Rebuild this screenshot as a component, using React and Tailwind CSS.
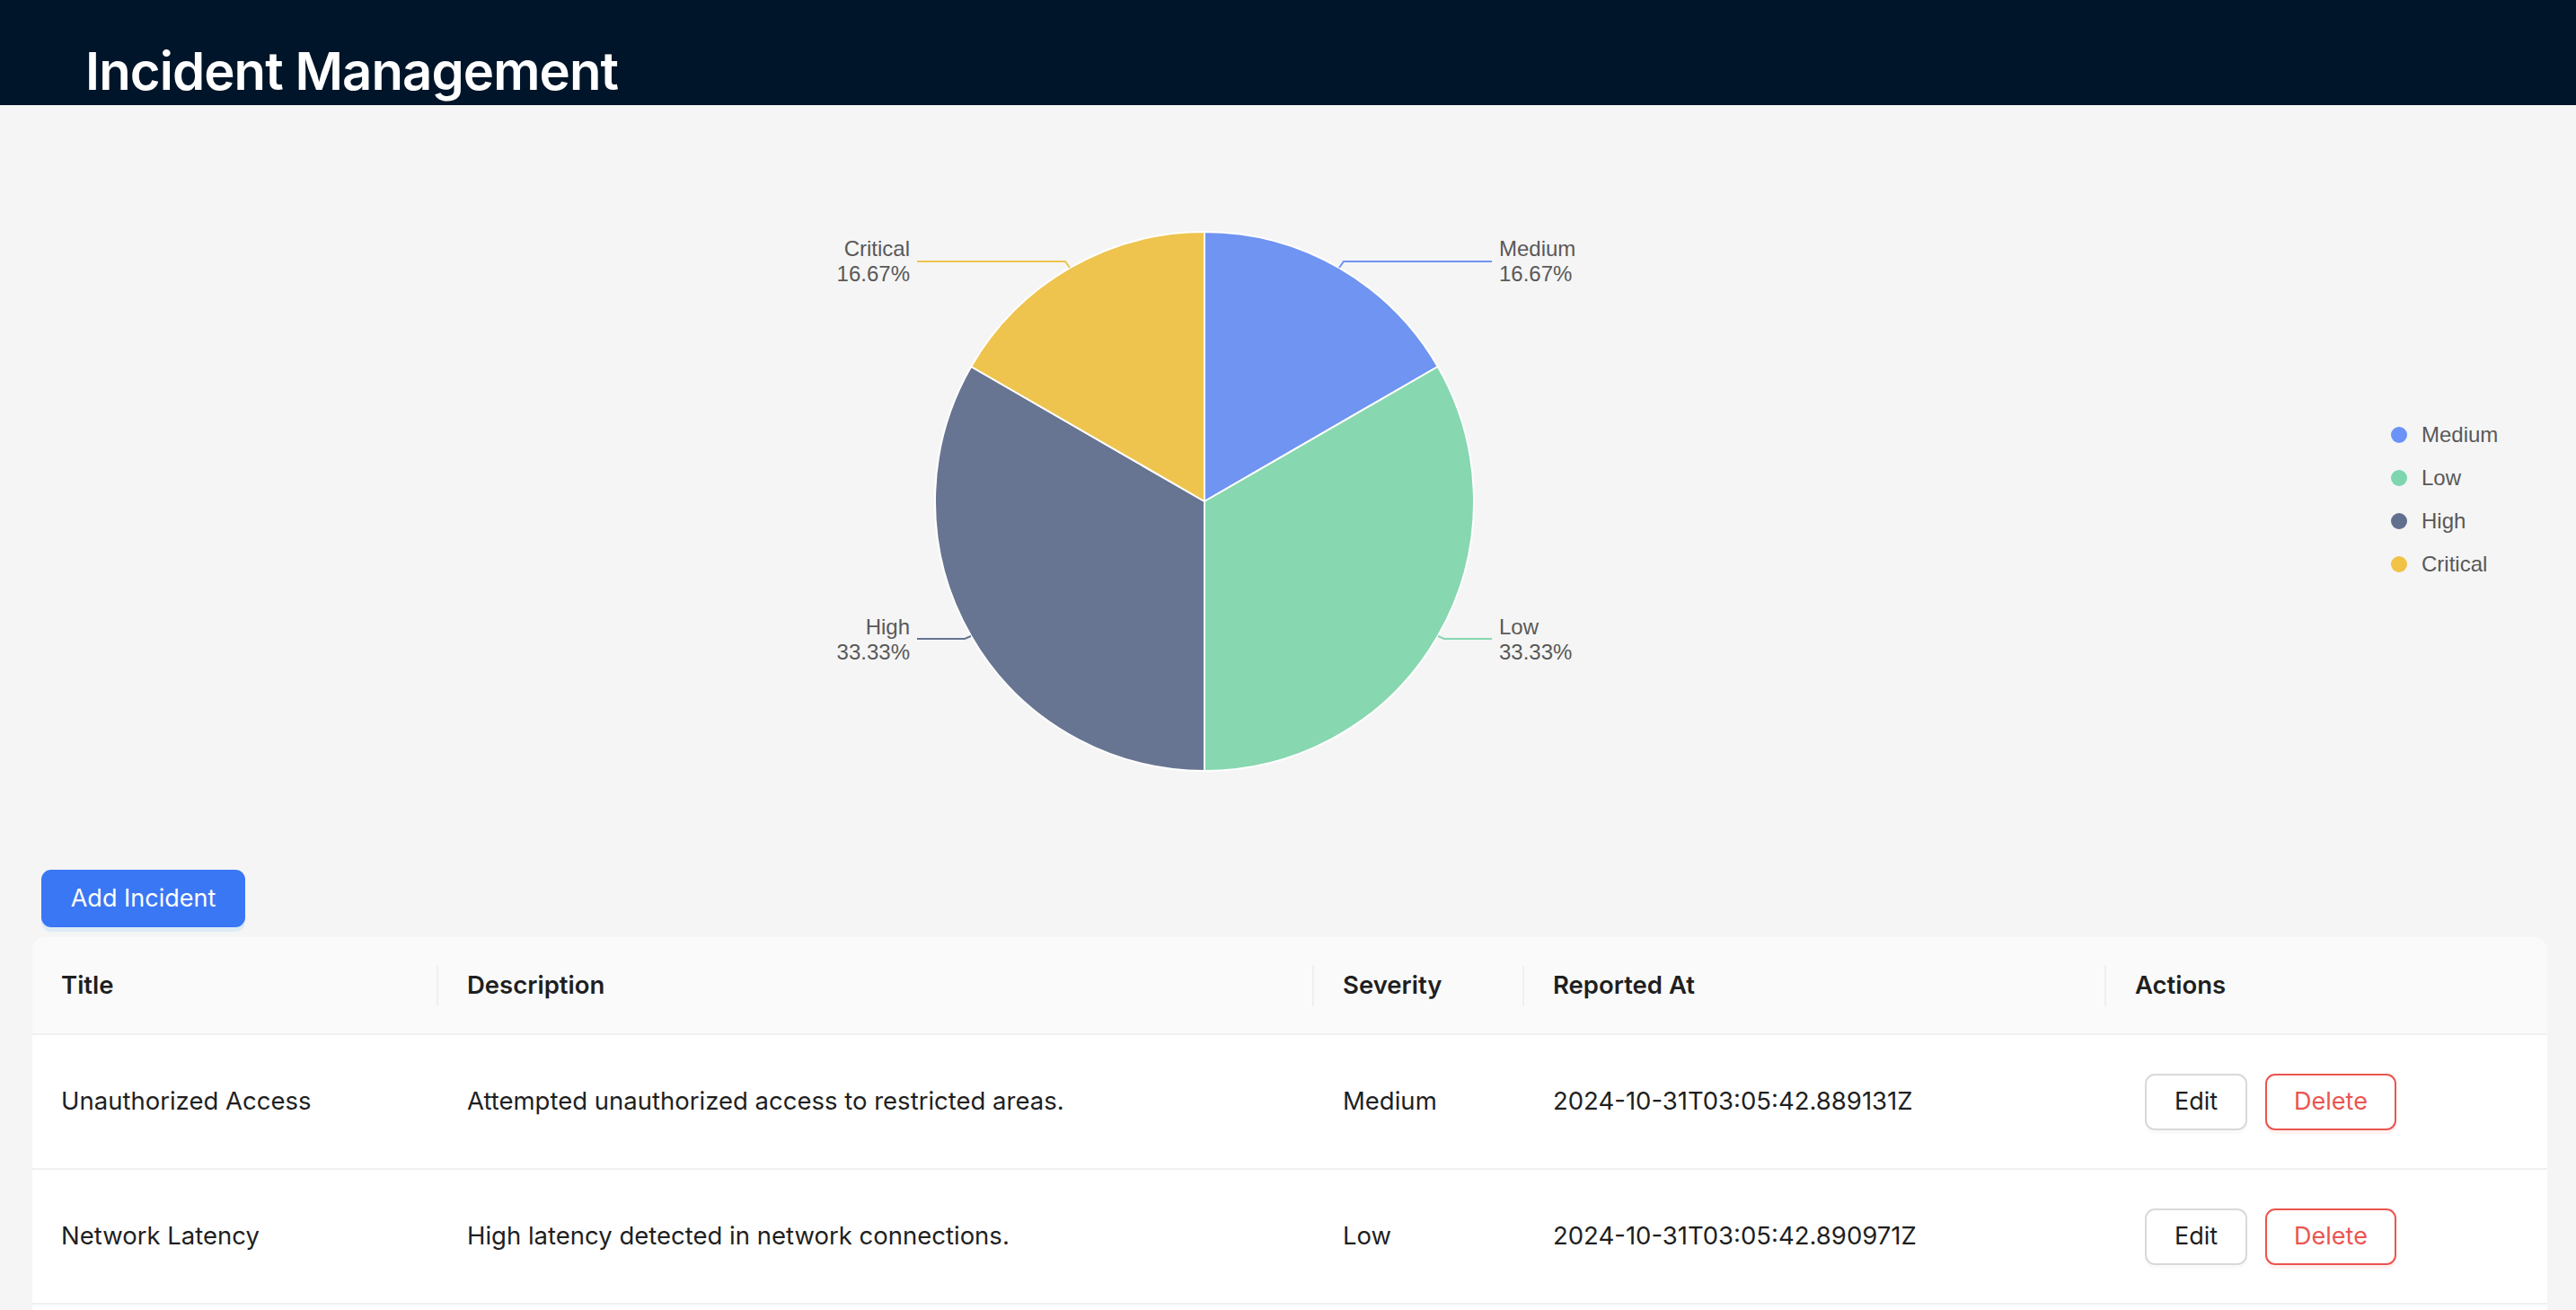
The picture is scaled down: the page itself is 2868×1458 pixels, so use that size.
import React from 'react';

const incidents = [
  { id: 1, title: 'Unauthorized Access', description: 'Attempted unauthorized access to restricted areas.', severity: 'Medium', reportedAt: '2024-10-31T03:05:42.889131Z' },
  { id: 2, title: 'Network Latency', description: 'High latency detected in network connections.', severity: 'Low', reportedAt: '2024-10-31T03:05:42.890971Z' },
  { id: 3, title: 'Server Outage', description: 'Primary application server stopped responding.', severity: 'High', reportedAt: '2024-10-31T03:05:42.891874Z' },
  { id: 4, title: 'Disk Usage Warning', description: 'Disk usage exceeded the configured threshold.', severity: 'Low', reportedAt: '2024-10-31T03:05:42.892510Z' },
  { id: 5, title: 'Malware Detected', description: 'Malicious software found on a workstation.', severity: 'High', reportedAt: '2024-10-31T03:05:42.893302Z' },
  { id: 6, title: 'Data Breach', description: 'Sensitive customer data exposed externally.', severity: 'Critical', reportedAt: '2024-10-31T03:05:42.894127Z' },
];

// pie slices, clockwise from 12 o'clock; coordinates are page pixels (svg viewBox matches)
const slices = [
  { name: 'Medium', fill: '#7094f1', dot: '#6a92f7', d: 'M1341,558 L1341,258 A300,300 0 0 1 1600.8,408 Z' },
  { name: 'Low', fill: '#87d7b0', dot: '#7dd6ae', d: 'M1341,558 L1600.8,408 A300,300 0 0 1 1341,858 Z' },
  { name: 'High', fill: '#677592', dot: '#61708f', d: 'M1341,558 L1341,858 A300,300 0 0 1 1081.2,408 Z' },
  { name: 'Critical', fill: '#eec44e', dot: '#f0c246', d: 'M1341,558 L1081.2,408 A300,300 0 0 1 1341,258 Z' },
];

const labels = [
  { name: 'Medium', pct: '16.67%', color: '#7094f1', line: '1491,298 1496,291 1661,291', x: 1669, y: 285, anchor: 'start' },
  { name: 'Low', pct: '33.33%', color: '#87d7b0', line: '1601,708 1608,711 1661,711', x: 1669, y: 706, anchor: 'start' },
  { name: 'High', pct: '33.33%', color: '#677592', line: '1081,708 1074,711 1021,711', x: 1013, y: 706, anchor: 'end' },
  { name: 'Critical', pct: '16.67%', color: '#eec44e', line: '1191,298 1186,291 1021,291', x: 1013, y: 285, anchor: 'end' },
];

function SeverityPie() {
  return (
    <div className="flex items-center h-[800px]">
      <svg width="2626" height="800" viewBox="36 158 2626 800" className="shrink-0">
        {slices.map(s => (
          <path key={s.name} d={s.d} fill={s.fill} stroke="#ffffff" strokeWidth="2" strokeLinejoin="round" />
        ))}
        {labels.map(l => (
          <g key={l.name}>
            <polyline points={l.line} fill="none" stroke={l.color} strokeWidth="2" />
            <text x={l.x} y={l.y} textAnchor={l.anchor} fontSize="24" fill="#595959" fontFamily="'Liberation Sans', Arial, sans-serif">{l.name}</text>
            <text x={l.x} y={l.y + 28} textAnchor={l.anchor} fontSize="24" fill="#595959" fontFamily="'Liberation Sans', Arial, sans-serif">{l.pct}</text>
          </g>
        ))}
      </svg>
      {/* Legend */}
      <div className="flex flex-col mb-[5px] font-['Liberation_Sans',Arial,sans-serif]">
        {slices.map(s => (
          <div key={s.name} className="flex items-center h-[48px]">
            <span className="w-[18px] h-[18px] rounded-full" style={{ backgroundColor: s.dot }} />
            <span className="ml-[16px] text-[24px] text-[#595959]">{s.name}</span>
          </div>
        ))}
      </div>
    </div>
  );
}

const cell = 'h-[150px] pl-[32px] border-b-2 border-[#f0f0f0] text-[27.5px] text-[#1f1f1f]';

export default function App() {
  return (
    <div className="min-h-screen bg-[#f5f5f5] font-['Inter',sans-serif]">
      {/* Header */}
      <div className="h-[117px] bg-[#001529] px-[95px] pt-[50px] overflow-hidden">
        <h1 className="text-[58px] leading-none font-semibold text-white tracking-[-0.9px]">Incident Management</h1>
      </div>

      <div className="pl-[36px] pr-[32px] pt-[41px]">
        <SeverityPie />

        <button className="ml-[10px] mt-[10px] w-[227px] h-[64px] rounded-[11px] bg-[#3a77f5] text-white text-[27px] shadow-[0_5px_0_rgba(5,145,255,0.1)]">
          Add Incident
        </button>

        {/* Incidents table */}
        <div className="mt-[11px] rounded-t-[15px] overflow-hidden bg-white">
          <table className="w-full table-fixed border-separate border-spacing-0 text-left">
            <colgroup>
              <col className="w-[452px]" />
              <col className="w-[975px]" />
              <col className="w-[234px]" />
              <col className="w-[648px]" />
              <col className="w-[491px]" />
            </colgroup>
            <thead>
              <tr className="bg-[#fafafa]">
                {['Title', 'Description', 'Severity', 'Reported At', 'Actions'].map((h, i) => (
                  <th
                    key={h}
                    className={`relative h-[109px] pl-[32px] border-b-2 border-[#f0f0f0] text-[27.5px] font-semibold text-[#1f1f1f] ${i < 4 ? "before:absolute before:right-0 before:top-1/2 before:-translate-y-1/2 before:h-[45px] before:w-[2px] before:bg-[#efefef] before:content-['']" : ''}`}
                  >
                    {h}
                  </th>
                ))}
              </tr>
            </thead>
            <tbody>
              {incidents.map(item => (
                <tr key={item.id}>
                  <td className={cell}>{item.title}</td>
                  <td className={cell}>{item.description}</td>
                  <td className={cell}>{item.severity}</td>
                  <td className={cell}>{item.reportedAt}</td>
                  <td className="h-[150px] pl-[32px] border-b-2 border-[#f0f0f0]">
                    <div className="flex items-center gap-[20px] ml-[11px]">
                      <button className="w-[114px] h-[63px] rounded-[11px] border-2 border-[#d9d9d9] bg-white text-[27px] text-[#1f1f1f] shadow-[0_4px_0_rgba(0,0,0,0.02)]">
                        Edit
                      </button>
                      <button className="w-[146px] h-[63px] rounded-[11px] border-2 border-[#ea5550] bg-white text-[27px] text-[#ea5550] shadow-[0_4px_0_rgba(255,38,5,0.06)]">
                        Delete
                      </button>
                    </div>
                  </td>
                </tr>
              ))}
            </tbody>
          </table>
        </div>
      </div>
    </div>
  );
}
